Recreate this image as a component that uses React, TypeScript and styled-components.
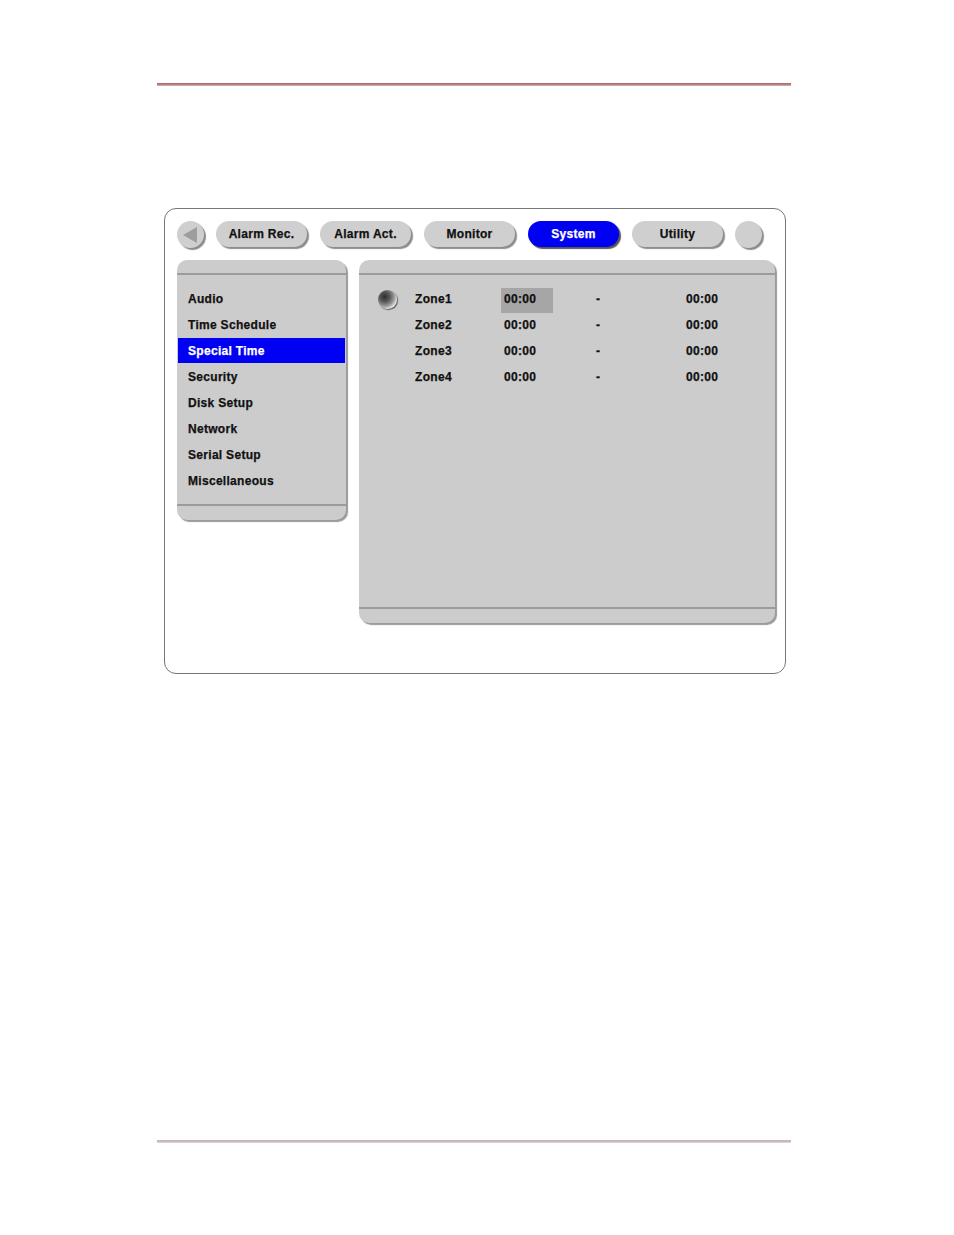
import React from "react";
import styled, { createGlobalStyle } from "styled-components";

const Global = createGlobalStyle`
  html, body { margin: 0; padding: 0; background: #ffffff; }
  body { font-family: "Liberation Sans", Arial, sans-serif; }
`;

const Page = styled.div`
  width: 954px;
  height: 1235px;
  display: flex;
  flex-direction: column;
  overflow: hidden;
`;

const TopRule = styled.div`
  margin: 83px 0 0 157px;
  width: 634px;
  height: 3px;
  flex: none;
  background: linear-gradient(#9c6464, #b98484 50%, #d9b3b3);
`;

const BottomRule = styled.div`
  margin: 466px 0 0 157px;
  width: 634px;
  height: 3px;
  flex: none;
  background: linear-gradient(#bdb5b5, #c8bcbc 50%, #f3d6d6);
`;

const Frame = styled.div`
  margin: 122px 0 0 164px;
  width: 622px;
  height: 466px;
  flex: none;
  box-sizing: border-box;
  border: 1px solid #777;
  border-radius: 12px;
  padding: 12px 0 0 12px;
  display: flex;
  flex-direction: column;
  gap: 10px;
`;

const TabRow = styled.div`
  display: flex;
  align-items: flex-start;
  height: 29px;
`;

const Round = styled.div<{ $ml?: number }>`
  width: 27px;
  height: 27px;
  flex: none;
  margin-left: ${(p) => p.$ml ?? 0}px;
  border-radius: 50%;
  background: #cfcfcf;
  box-shadow: 2px 2px 1px #8c8c8c;
  display: flex;
  align-items: center;
  justify-content: center;
`;

const Tabs = styled.div`
  display: flex;
  gap: 13px;
  margin-left: 12px;
`;

const Tab = styled.div<{ $active?: boolean }>`
  width: 91px;
  height: 26px;
  flex: none;
  border-radius: 14px;
  background: ${(p) => (p.$active ? "#0000f2" : "#cfcfcf")};
  color: ${(p) => (p.$active ? "#ffffff" : "#111111")};
  box-shadow: 2px 2px 1px ${(p) => (p.$active ? "#555" : "#8c8c8c")};
  display: flex;
  align-items: center;
  justify-content: center;
  font-weight: 700;
  font-size: 12px;
  letter-spacing: 0.3px;
  -webkit-text-stroke: 0.25px currentColor;
`;

const PanelRow = styled.div`
  display: flex;
  align-items: flex-start;
  gap: 13px;
`;

const Panel = styled.div<{ $w: number; $h: number; $foot: number }>`
  width: ${(p) => p.$w}px;
  height: ${(p) => p.$h}px;
  flex: none;
  background: #cccccc;
  border-radius: 10px;
  box-shadow: 2px 2px 1px #9a9a9a;
  display: grid;
  grid-template-rows: 13px 2px 1fr 2px ${(p) => p.$foot}px;
`;

const Rule = styled.div`
  background: #9c9c9c;
`;

const Menu = styled.div`
  padding: 11px 1px 0 1px;
  display: flex;
  flex-direction: column;
`;

const MenuItem = styled.div<{ $active?: boolean }>`
  height: 26px;
  display: flex;
  align-items: center;
  padding: 0 0 0 10px;
  font-weight: 700;
  font-size: 12px;
  letter-spacing: 0.3px;
  -webkit-text-stroke: 0.25px currentColor;
  color: ${(p) => (p.$active ? "#ffffff" : "#111111")};
  background: ${(p) => (p.$active ? "#0000f2" : "transparent")};
  ${(p) => (p.$active ? "height: 25px; margin-bottom: 1px;" : "")}
`;

const ZoneGrid = styled.div`
  padding: 11px 0 0 19px;
  display: grid;
  grid-template-columns: 37px 86px 52px 133px 80px;
  grid-auto-rows: 26px;
  align-content: start;
  font-weight: 700;
  font-size: 12px;
  letter-spacing: 0.3px;
  -webkit-text-stroke: 0.25px currentColor;
  color: #111;
`;

const Cell = styled.div<{ $sel?: boolean; $pad?: number }>`
  display: flex;
  align-items: center;
  padding-left: ${(p) => p.$pad ?? 0}px;
  ${(p) =>
    p.$sel ? "background: #a6a6a6; margin: 2px 0 -1px 0; padding-bottom: 3px;" : ""}
`;

const Ball = styled.div`
  width: 19px;
  height: 19px;
  border-radius: 50%;
  background: radial-gradient(
    circle at 35% 35%,
    #2e2e2e 0%,
    #5a5a5a 30%,
    #9a9a9a 55%,
    #d6d6d6 70%,
    #f6f6f6 80%,
    #8a8a8a 92%,
    #cfcfcf 100%
  );
  box-shadow: 1px 1px 1px #555;
  margin-top: 1px;
`;

const menu = [
  "Audio",
  "Time Schedule",
  "Special Time",
  "Security",
  "Disk Setup",
  "Network",
  "Serial Setup",
  "Miscellaneous",
];

const tabs = ["Alarm Rec.", "Alarm Act.", "Monitor", "System", "Utility"];

export default function App() {
  return (
    <Page>
      <Global />
      <TopRule />
      <Frame>
        <TabRow>
          <Round>
            <svg width="18" height="18" viewBox="0 0 18 18">
              <polygon points="1,9 15,1 15,17" fill="#9d9d9d" />
            </svg>
          </Round>
          <Tabs>
            {tabs.map((t) => (
              <Tab key={t} $active={t === "System"}>
                {t}
              </Tab>
            ))}
          </Tabs>
          <Round $ml={12} />
        </TabRow>
        <PanelRow>
          <Panel $w={169} $h={260} $foot={14}>
            <div />
            <Rule />
            <Menu>
              {menu.map((m) => (
                <MenuItem key={m} $active={m === "Special Time"}>
                  {m}
                </MenuItem>
              ))}
            </Menu>
            <Rule />
            <div />
          </Panel>
          <Panel $w={416} $h={363} $foot={14}>
            <div />
            <Rule />
            <ZoneGrid>
              {[1, 2, 3, 4].map((n) => (
                <React.Fragment key={n}>
                  <Cell>{n === 1 ? <Ball /> : null}</Cell>
                  <Cell>Zone{n}</Cell>
                  <Cell $sel={n === 1} $pad={3}>
                    00:00
                  </Cell>
                  <Cell $pad={43}>-</Cell>
                  <Cell>00:00</Cell>
                </React.Fragment>
              ))}
            </ZoneGrid>
            <Rule />
            <div />
          </Panel>
        </PanelRow>
      </Frame>
      <BottomRule />
    </Page>
  );
}
